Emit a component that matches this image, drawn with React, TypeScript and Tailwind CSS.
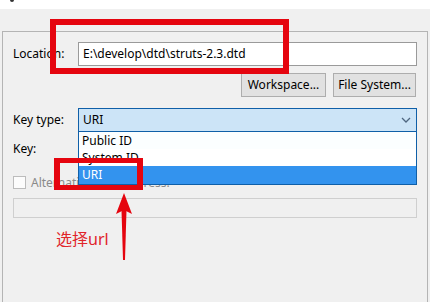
import React from "react";

const font = { fontFamily: '"Noto Sans", "Noto Sans CJK SC", sans-serif' };

export default function App() {
  return (
    <div className="relative w-[430px] h-[302px] overflow-hidden bg-[#f0f0f0] text-[12px] text-black" style={font}>
      {/* top strip */}
      <div className="h-[9px] bg-white" />
      <div className="absolute left-[10px] top-0 w-[4px] h-[2px] rounded-b bg-[#333]" />

      {/* group panel */}
      <div className="mt-[22px] ml-[2px] w-[426px] h-[280px] border border-b-0 border-[#b4b4b4] pl-[10px] pr-[10px] pt-[10px]">
        <div className="flex items-center h-[24px]">
          <span className="w-[65px] leading-none">Location:</span>
          <div className="flex-1 h-[24px] border border-[#9a9a9a] bg-white flex items-center pl-[4px]">
            E:\develop\dtd\struts-2.3.dtd
          </div>
        </div>

        <div className="flex justify-end gap-[7px] mt-[7px]">
          <button className="w-[85px] h-[24px] border border-[#adadad] bg-[#e1e1e1] leading-none">Workspace...</button>
          <button className="w-[83px] h-[24px] border border-[#adadad] bg-[#e1e1e1] leading-none mr-[1px]">File System...</button>
        </div>

        <div className="flex items-center h-[24px] mt-[11px]">
          <span className="w-[65px] leading-none">Key type:</span>
          <div className="flex-1 h-[24px] border border-[#0f5fa8] bg-[#cce4f7] flex items-center justify-between pl-[4px] pr-[5px]">
            <span>URI</span>
            <svg width="10" height="6" viewBox="0 0 10 6" fill="none">
              <path d="M1 1 L5 5 L9 1" stroke="#4f6680" strokeWidth="1.3" />
            </svg>
          </div>
        </div>

        <div className="flex items-center h-[22px] mt-[6px]">
          <span className="w-[65px] leading-none">Key:</span>
          <div className="flex-1 h-[22px] border border-[#adadad] bg-white" />
        </div>

        <div className="flex items-center gap-[5px] mt-[16px] h-[13px]">
          <div className="w-[13px] h-[13px] border border-[#bcbcbc] bg-[#fcfcfc]" />
          <span className="text-[#8a8a8a] leading-none">Alternative web address:</span>
        </div>

        <div className="mt-[9px] h-[20px] border border-[#cfcfcf] bg-[#f0f0f0]" />
      </div>

      {/* open dropdown list */}
      <div className="absolute left-[78px] top-[132px] w-[339px] h-[53px] border border-[#0f5fa8] border-t-0 bg-white flex flex-col">
        <div className="h-[17px] flex items-center pl-[3px] bg-[#fbfeff]">Public ID</div>
        <div className="h-[17px] flex items-center pl-[3px]">System ID</div>
        <div className="h-[18px] flex items-center pl-[3px] bg-[#3393ee] text-white">URI</div>
      </div>

      {/* annotations */}
      <div className="absolute left-[50px] top-[19px] w-[239px] h-[55px] border-[6px] border-[#e5050f]" />
      <div className="absolute left-[54px] top-[158px] w-[89px] h-[32px] border-x-[6px] border-y-[5px] border-[#e5050f]" />

      <svg className="absolute left-[110px] top-[188px]" width="30" height="76" viewBox="0 0 30 76">
        <polygon points="14,5 6,26 14,22 22,26" fill="#e5050f" />
        <polygon points="11.5,22 16.5,22 15,72 13,72" fill="#e5050f" />
      </svg>

      <div className="absolute left-[56px] top-[229px] text-[16px] text-[#e0242a] leading-[20px]">选择url</div>
    </div>
  );
}
